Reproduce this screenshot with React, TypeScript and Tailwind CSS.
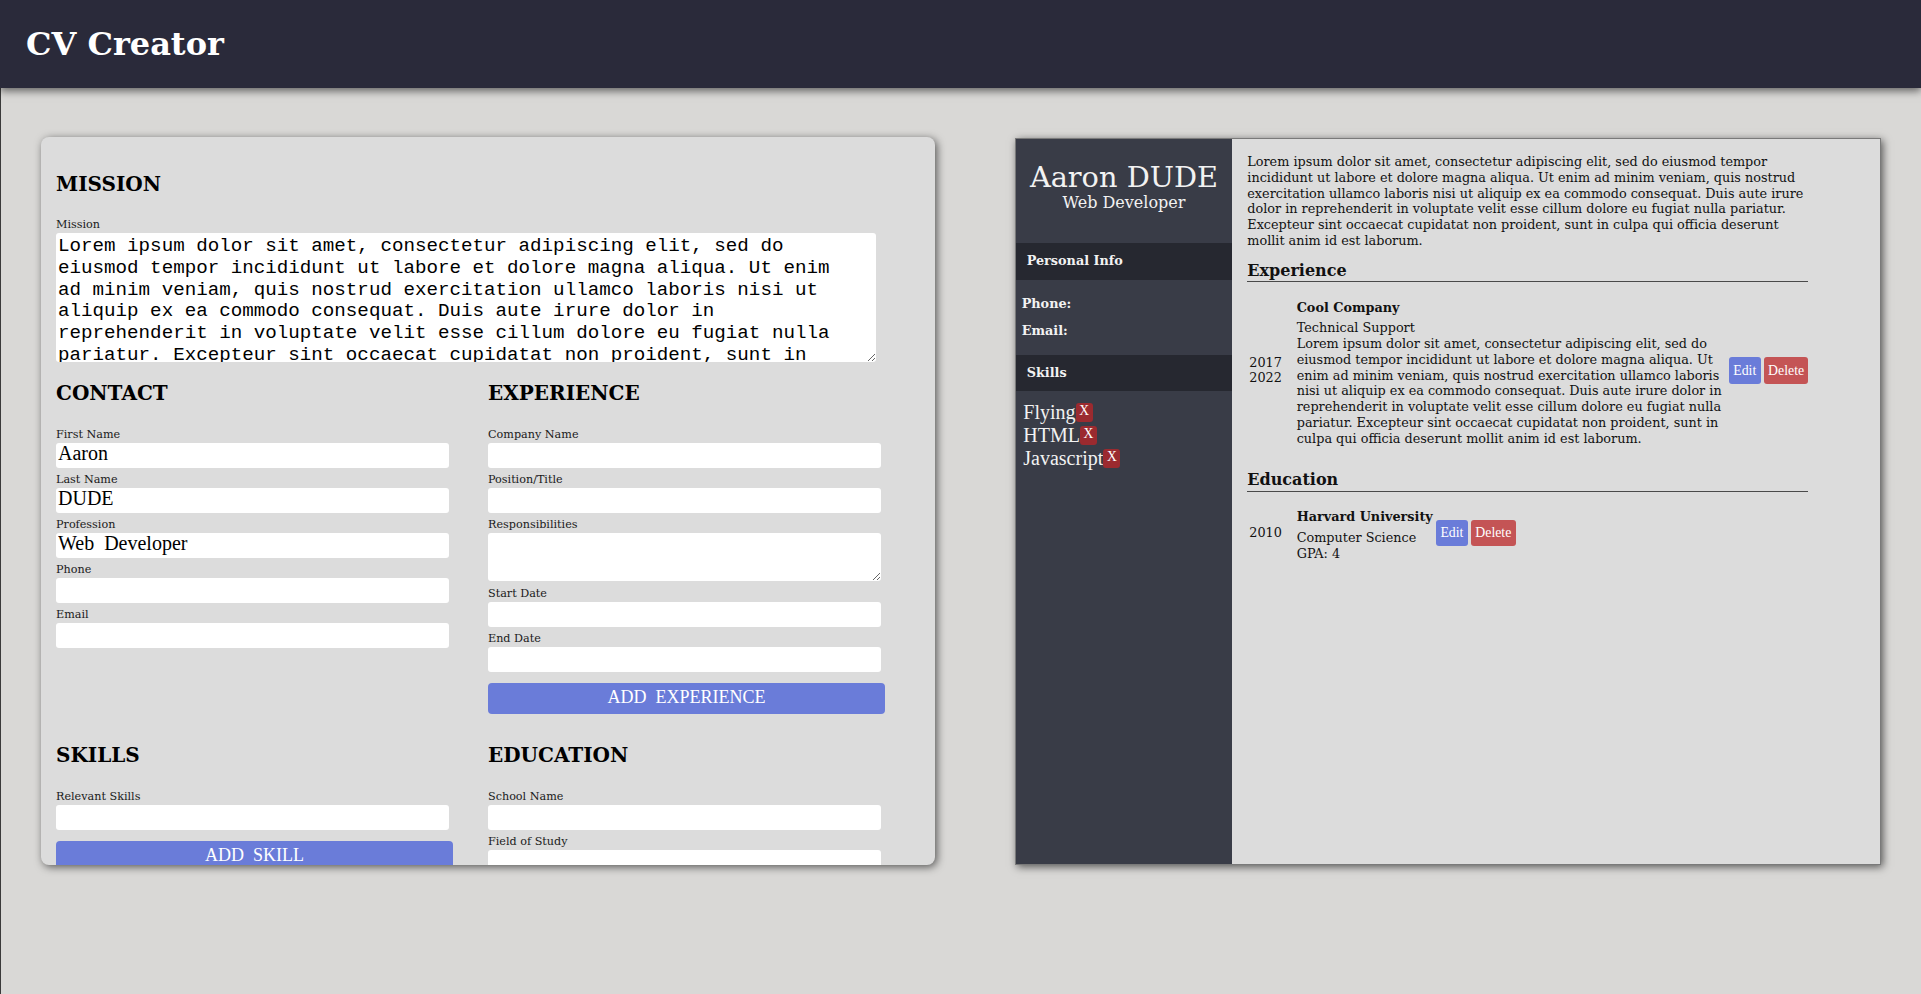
import React from "react";

const LOREM =
  "Lorem ipsum dolor sit amet, consectetur adipiscing elit, sed do eiusmod tempor incididunt ut labore et dolore magna aliqua. Ut enim ad minim veniam, quis nostrud exercitation ullamco laboris nisi ut aliquip ex ea commodo consequat. Duis aute irure dolor in reprehenderit in voluptate velit esse cillum dolore eu fugiat nulla pariatur. Excepteur sint occaecat cupidatat non proident, sunt in culpa qui officia deserunt mollit anim id est laborum.";

function H({ children }: { children: React.ReactNode }) {
  return <h2 className="mb-[18px] text-[20px] font-bold leading-[24px] text-black">{children}</h2>;
}

function Field({ label, children }: { label: string; children: React.ReactNode }) {
  return (
    <div className="pt-[4.7px]">
      <label className="mb-[2px] block text-[11.2px] leading-[13px] text-[#1a1a1a]">{label}</label>
      {children}
    </div>
  );
}

function Input({ value }: { value?: string }) {
  return (
    <input
      defaultValue={value}
      className="block h-[25.3px] w-[393px] rounded-[3px] bg-white px-[2px] pb-[5px] font-['Liberation_Serif',serif] text-[20px] leading-[20px] text-black outline-none"
    />
  );
}

function AddButton({ children }: { children: React.ReactNode }) {
  return (
    <button className="mt-[11px] mb-[9.7px] block h-[31.4px] w-[397px] rounded-[4px] bg-[#6a7cd9] pb-[3px] font-['Liberation_Serif',serif] text-[18px] leading-[20px] whitespace-pre text-white">
      {children}
    </button>
  );
}

function SmallBtn({ children, red }: { children: React.ReactNode; red?: boolean }) {
  return (
    <button
      className={
        red
          ? "h-[26.3px] rounded-[3px] bg-[#c45455] px-[4.2px] font-['Liberation_Serif',serif] text-[13.8px] leading-[15px] text-white"
          : "h-[26.3px] rounded-[3px] bg-[#6a7cd9] px-[4.4px] font-['Liberation_Serif',serif] text-[13.8px] leading-[15px] text-white"
      }
    >
      {children}
    </button>
  );
}

export default function App() {
  const skills = ["Flying", "HTML", "Javascript"];
  return (
    <div className="min-h-[994px] bg-[#d9d8d6] font-['DejaVu_Serif',serif] text-black">
      <header className="relative z-10 h-[88px] bg-[#2a2a3a] px-[26px] pt-[25.5px] shadow-[0_3px_8px_rgba(0,0,0,0.55)]">
        <h1 className="text-[32px] font-bold leading-[37px] text-white">CV Creator</h1>
      </header>
      <main className="flex h-[906px] gap-[80px] border-l border-[#3a3a3a] pl-[40px] pt-[49px]">
        {/* Left: form */}
        <section className="h-[728px] w-[894px] shrink-0 overflow-hidden rounded-[8px] bg-[#dcdcdc] px-[15px] pt-[34.5px] shadow-[2px_2px_8px_rgba(0,0,0,0.6)]">
          <div className="grid grid-cols-2">
            <div className="col-span-2">
              <H>MISSION</H>
              <Field label="Mission">
                <textarea
                  defaultValue={LOREM}
                  className="block h-[129px] w-[820px] overflow-hidden rounded-[3px] bg-white pt-[3px] pl-[2px] pr-[28px] font-['Liberation_Mono',monospace] text-[19.2px] leading-[21.76px] text-black outline-none"
                />
              </Field>
            </div>
            <div className="pt-[19px]">
              <H>CONTACT</H>
              <Field label="First Name">
                <Input value="Aaron" />
              </Field>
              <Field label="Last Name">
                <Input value="DUDE" />
              </Field>
              <Field label="Profession">
                <Input value="Web  Developer" />
              </Field>
              <Field label="Phone">
                <Input />
              </Field>
              <Field label="Email">
                <Input />
              </Field>
            </div>
            <div className="pt-[19px]">
              <H>EXPERIENCE</H>
              <Field label="Company Name">
                <Input />
              </Field>
              <Field label="Position/Title">
                <Input />
              </Field>
              <Field label="Responsibilities">
                <textarea className="mb-[1.4px] block h-[47.7px] w-[393px] rounded-[3px] bg-white px-[2px] font-['Liberation_Serif',serif] text-[16px] outline-none" />
              </Field>
              <Field label="Start Date">
                <Input />
              </Field>
              <Field label="End Date">
                <Input />
              </Field>
              <AddButton>ADD  EXPERIENCE</AddButton>
            </div>
            <div className="pt-[19px]">
              <H>SKILLS</H>
              <Field label="Relevant Skills">
                <Input />
              </Field>
              <AddButton>ADD  SKILL</AddButton>
            </div>
            <div className="pt-[19px]">
              <H>EDUCATION</H>
              <Field label="School Name">
                <Input />
              </Field>
              <Field label="Field of Study">
                <Input />
              </Field>
              <Field label="Graduation Year">
                <Input />
              </Field>
              <Field label="GPA">
                <Input />
              </Field>
              <AddButton>ADD  EDUCATION</AddButton>
            </div>
          </div>
        </section>

        {/* Right: preview */}
        <section className="mt-[1px] flex h-[727px] w-[866px] shrink-0 border border-[#7a7a7a] bg-[#dcdcdc] shadow-[2px_2px_8px_rgba(0,0,0,0.6)]">
          <aside className="w-[216px] shrink-0 bg-[#393c47] text-[#f2f2f2]">
            <div className="pt-[21px] pb-[30px] text-center">
              <div className="text-[28.8px] leading-[34px]">Aaron DUDE</div>
              <div className="text-[16px] leading-[18.6px]">Web Developer</div>
            </div>
            <div className="bg-[#262830] px-[10.7px] py-[10.8px] text-[12.8px] font-bold leading-[15.7px]">Personal Info</div>
            <div className="flex flex-col gap-[11.2px] px-[5.7px] py-[16.3px] text-[12.8px] font-bold leading-[15.5px]">
              <div>Phone:</div>
              <div>Email:</div>
            </div>
            <div className="bg-[#262830] px-[10.7px] py-[10.5px] text-[12.8px] font-bold leading-[15.7px]">Skills</div>
            <div className="pl-[7.3px] pt-[9.8px] font-['Liberation_Serif',serif] text-[20px] leading-[23px]">
              {skills.map((s) => (
                <div key={s} className="flex items-center">
                  <span>{s}</span>
                  <span className="block h-[18.4px] rounded-[3px] bg-[#9b2a2f] px-[3.6px] text-[13.6px] leading-[15.3px] text-white">
                    X
                  </span>
                </div>
              ))}
            </div>
          </aside>
          <div className="flex-1 pl-[15.3px] pt-[15px] text-[#111]">
            <div className="flex w-[561px] flex-col">
              <p className="text-[12.8px] leading-[15.75px]">{LOREM}</p>
              <h3 className="mt-[13px] border-b border-[#4a4a4a] pb-[1px] text-[16px] font-bold leading-[18.6px]">Experience</h3>
              <div className="mt-[12.5px] mb-[12.5px] flex items-center text-[12.8px] leading-[15.75px]">
                <div className="w-[49.4px] shrink-0 pl-[2px]">
                  2017
                  <br />
                  2022
                </div>
                <div className="min-w-0">
                  <div className="py-[5px] font-bold">Cool Company</div>
                  <div>Technical Support</div>
                  <div>{LOREM}</div>
                </div>
                <div className="ml-[3.3px] flex shrink-0 gap-[3.3px]">
                  <SmallBtn>Edit</SmallBtn>
                  <SmallBtn red>Delete</SmallBtn>
                </div>
              </div>
              <h3 className="mt-[12.2px] border-b border-[#4a4a4a] pb-[1px] text-[16px] font-bold leading-[18.6px]">Education</h3>
              <div className="mt-[12.5px] flex items-center text-[12.8px] leading-[15.75px]">
                <div className="w-[49.4px] shrink-0 pl-[2px]">2010</div>
                <div className="min-w-0">
                  <div className="py-[5px] font-bold">Harvard University</div>
                  <div>Computer Science</div>
                  <div>GPA: 4</div>
                </div>
                <div className="ml-[3.3px] flex shrink-0 gap-[3.3px]">
                  <SmallBtn>Edit</SmallBtn>
                  <SmallBtn red>Delete</SmallBtn>
                </div>
              </div>
            </div>
          </div>
        </section>
      </main>
    </div>
  );
}
